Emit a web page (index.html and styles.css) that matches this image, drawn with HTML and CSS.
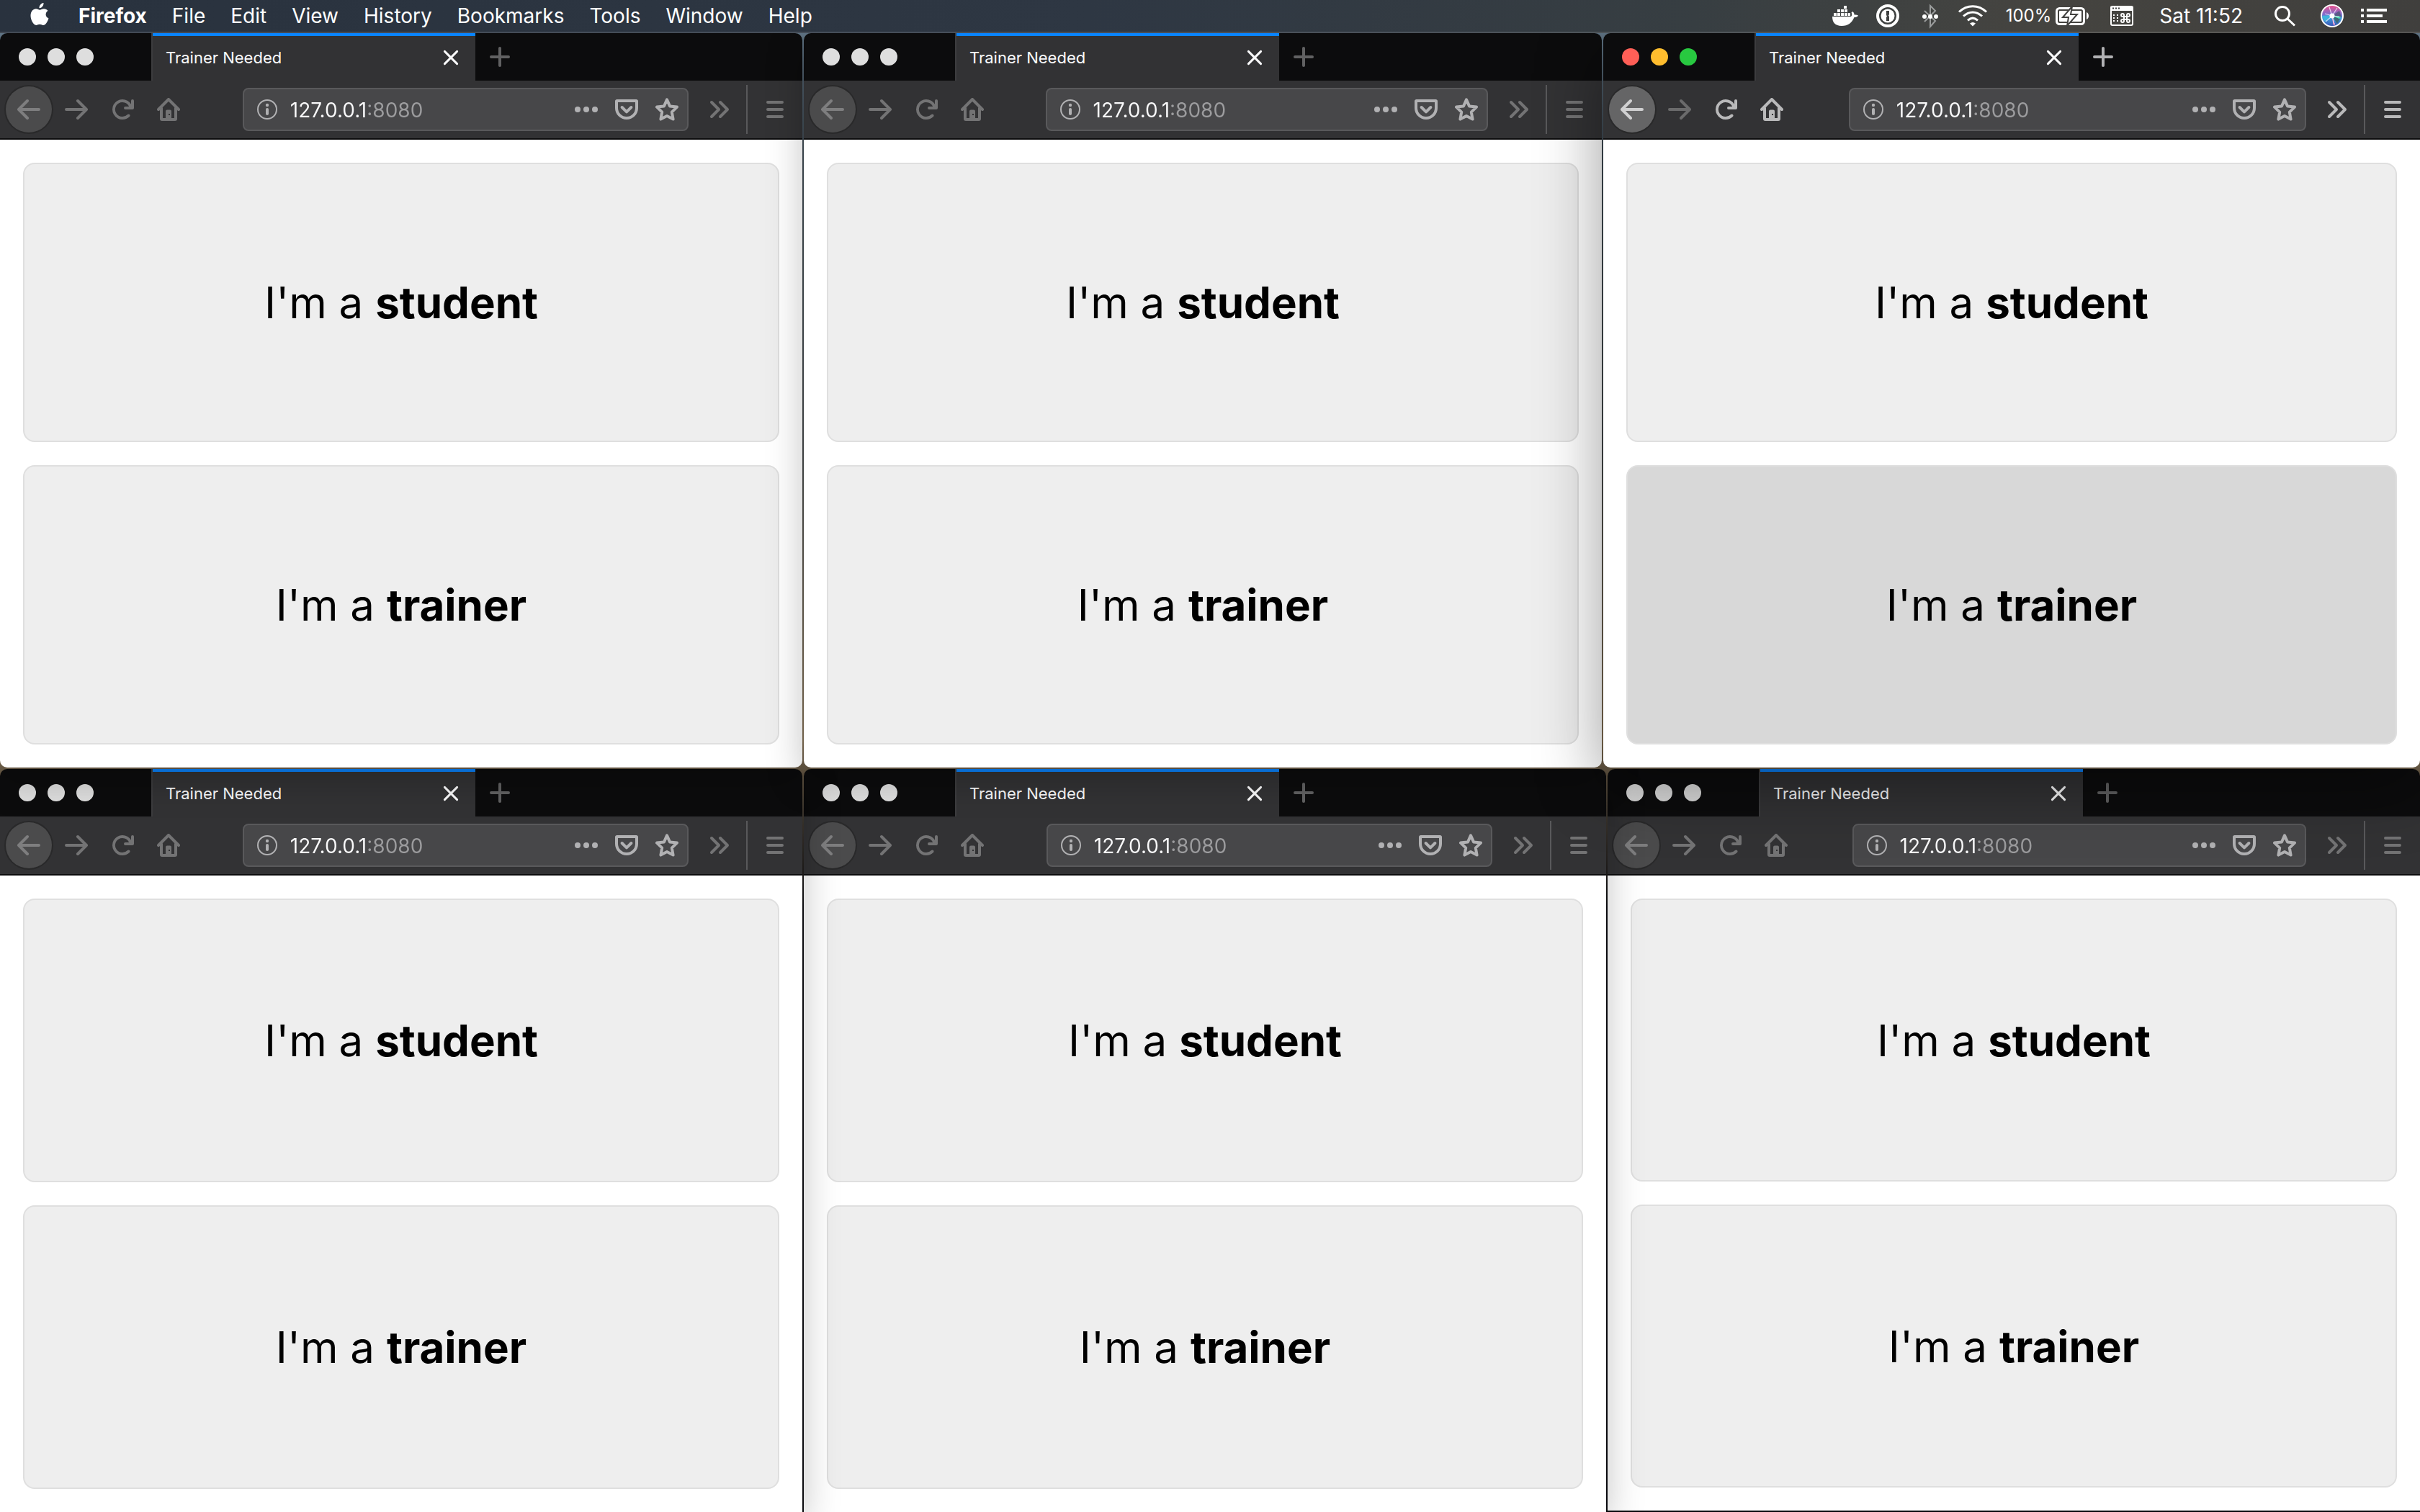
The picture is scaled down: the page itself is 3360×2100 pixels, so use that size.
FILE: index.html
```html
<!DOCTYPE html>
<html lang="en">
<head>
<meta charset="utf-8">
<title>Trainer Needed</title>
<link rel="stylesheet" href="styles.css">
</head>
<body>
<svg class="sprite" aria-hidden="true">
  <symbol id="back" viewBox="0 0 16 16"><path class="line" d="M15 8H1.5M7 2L1 8l6 6"/></symbol>
  <symbol id="forward" viewBox="0 0 16 16"><path class="line" d="M1 8h13.500M9 2l6 6-6 6"/></symbol>
  <symbol id="reload" viewBox="0 0 16 16"><path d="M15 1a1 1 0 0 0-1 1v2.418A6.995 6.995 0 1 0 8 15a6.954 6.954 0 0 0 4.95-2.05 1 1 0 0 0-1.414-1.414A5.019 5.019 0 1 1 12.549 6H10a1 1 0 0 0 0 2h5a1 1 0 0 0 1-1V2a1 1 0 0 0-1-1z"/></symbol>
  <symbol id="home" viewBox="0 0 16 16"><path class="line" d="M1 8l7-7 7 7M3 7v7.500a.5.5 0 0 0 .5.5h9a.5.5 0 0 0 .5-.5V7"/><path fill-rule="evenodd" d="M6 15V9.200A1 1 0 0 1 7 8.200h2a1 1 0 0 1 1 1V15zM8 11v1h1v-1z"/></symbol>
  <symbol id="info" viewBox="0 0 16 16"><circle class="thin" cx="8" cy="8" r="6.500"/><circle cx="8" cy="5" r="1.100"/><path class="line" d="M8 8v3"/></symbol>
  <symbol id="dots" viewBox="0 0 16 16"><circle cx="2" cy="8" r="2"/><circle cx="8" cy="8" r="2"/><circle cx="14" cy="8" r="2"/></symbol>
  <symbol id="pocket" viewBox="0 0 16 16"><path class="line" d="M1.300 2h13.400a.3.3 0 0 1 .3.300V7A7 7 0 0 1 1 7V2.300a.3.3 0 0 1 .3-.3z"/><path class="line" d="M4.800 6.500L8 9.700l3.200-3.200"/></symbol>
  <symbol id="star" viewBox="0 0 16 16"><path class="line" d="M8 1.200l2 4.500 5 .6-3.600 3.500.9 5L8 12.500l-4.300 2.300.9-5L1 6.300l5-.6z"/></symbol>
  <symbol id="more" viewBox="0 0 16 16"><path class="line" d="M3 3l5 5-5 5M9 3l5 5-5 5"/></symbol>
  <symbol id="menu" viewBox="0 0 16 16"><path class="line" d="M3 3h10M3 8h10M3 13h10"/></symbol>
  <symbol id="close" viewBox="0 0 16 16"><path class="mid" d="M3.700 3.700l8.600 8.600M12.300 3.700l-8.600 8.600"/></symbol>
  <symbol id="plus" viewBox="0 0 16 16"><path class="line" d="M8 2v12M2 8h12"/></symbol>
</svg>

<header class="menubar">
  <nav class="menus">
    <button class="apple" aria-label="Apple menu"><svg viewBox="0 0 26 32"><path d="M18.500 0c.3 3.800-2.600 7.200-6 7.300C12.100 3.700 15.300.4 18.500 0z"/><path d="M24.500 11c-4.300 2.600-3.700 8.600 1 10.500C24 26 21.300 31 18 31c-2 0-2.600-1.200-4.900-1.200S10 31 8.200 31C4.500 31 .5 23.600.5 17.800.5 12 4 8.300 8 8.300c2.200 0 3.800 1.400 5.200 1.400S16.500 8.200 19 8.200c2.200 0 4.200 1 5.500 2.800z"/></svg></button>
    <button class="app">Firefox</button>
    <button>File</button>
    <button>Edit</button>
    <button>View</button>
    <button>History</button>
    <button>Bookmarks</button>
    <button>Tools</button>
    <button>Window</button>
    <button>Help</button>
  </nav>
  <div class="status">
    <svg class="w38" viewBox="0 0 38 44"><path d="M1 23h26c1.500-1 1.500-4 .5-5.500L29 16c2 1 2.500 3 2.500 4.500 2-.3 4 0 5.500 1-1 2-3 2.500-5.500 2.500C28 32 23 36 14 36 5 36 1 31 1 23z"/><path d="M3 18h4v4H3zM8 18h4v4H8zM13 18h4v4h-4zM18 18h4v4h-4zM23 18h3v4h-3zM8 13h4v4H8zM13 13h4v4h-4zM18 13h4v4h-4zM17 8h4v4h-4z"/></svg>
    <svg class="w38" viewBox="0 0 38 44"><circle class="ring" cx="16" cy="22" r="14"/><circle cx="16" cy="22" r="9.500"/><path class="hole" d="M14 15h4v5l-1 1.500 1 1.500v6h-4v-5l1-1.500-1-1.500z"/></svg>
    <svg class="w26" viewBox="0 0 26 44"><path class="rune" d="M5 15l15 14-7 8V8l7 7L5 30"/><circle cx="5" cy="23" r="3"/><circle cx="13" cy="23" r="3"/><circle cx="21" cy="23" r="3"/></svg>
    <svg class="w44" viewBox="0 0 44 44"><path class="wave" d="M3 16.500c11-10.500 27-10.500 38 0M9 22.500c8-7.500 18-7.500 26 0M15 28.300c4.500-4 9.500-4 14 0"/><path d="M18 32.500c2.500-2 5.500-2 8 0L22 36.500z"/></svg>
    <div class="battery"><span>100%</span>
      <svg class="w48" viewBox="0 0 48 44"><rect class="wave" x="1.500" y="11.500" width="38" height="22" rx="4"/><rect x="5" y="15" width="31" height="15" rx="1"/><path d="M43 17c4 1.500 4 8.500 0 10z"/><path class="bolt" d="M23 9L10 24h8l-2 12 14-16h-9z"/></svg></div>
    <svg class="w48" viewBox="0 0 48 44"><rect class="frame" x="5" y="9" width="30" height="26" rx="2"/><path d="M4 9h32v6H4z"/><path class="hole" d="M7 10.500h2v2H7zM11 10.500h2v2h-2zM15 10.500h2v2h-2z"/><path d="M8 20h2v2H8zM13 20h2v2h-2zM8 24h2v2H8zM13 24h2v2h-2zM8 28h2v2H8zM13 28h2v2h-2z"/><path class="frame" d="M23 21v8a2 2 0 1 1-2-2h8a2 2 0 1 1-2 2v-8a2 2 0 1 1 2 2h-8a2 2 0 1 1 2-2z"/></svg>
    <time>Sat 11:52</time>
    <svg class="w60" viewBox="0 0 60 44"><circle class="glass" cx="31" cy="19" r="9.500"/><path class="glass" d="M38 26l10 9.500"/></svg>
    <svg class="w32" viewBox="0 0 32 44"><defs><linearGradient id="siri" x1="0" y1="0" x2="0" y2="1"><stop offset="0" stop-color="#f0508c"/><stop offset=".45" stop-color="#7a6fd0"/><stop offset=".6" stop-color="#3f9fd8"/><stop offset="1" stop-color="#3a4fb5"/></linearGradient></defs><circle cx="16" cy="22" r="15" fill="url(#siri)"/><path d="M17 21l9-6 3 9z" fill="#5a5a86"/><path d="M16 22l11 4-4 7z" fill="#3c6b78"/><path d="M2 22l13-1-9 9z" fill="#3fb4dc"/><path d="M16 22l12 1-2 3z" fill="#52e0b4"/><path d="M15 22l3 13 2-1z" fill="#ff7ac0"/><path d="M16 22L12 10M16 22l7-11M16 22L6 19M16 22l-9 8M16 22l10 1M16 22l3 12" stroke="#fff" stroke-opacity=".7" stroke-width="1.200"/><circle cx="16" cy="22" r="3.500"/><circle class="siri-rim" cx="16" cy="22" r="15"/></svg>
    <svg class="w36" viewBox="0 0 36 44"><path d="M0 12h4v4H0zM8 12h28v4H8zM0 20h4v4H0zM8 20h22v4H8zM0 28h4v4H0zM8 28h28v4H8z"/></svg>
  </div>
</header>

<div class="desktop">
  <div class="row row-top">
    <section class="window">
      <div class="tabstrip"><div class="lights"><i></i><i></i><i></i></div><div class="tab"><span>Trainer Needed</span><button aria-label="Close tab"><svg><use href="#close"/></svg></button></div><button class="newtab" aria-label="New tab"><svg><use href="#plus"/></svg></button></div>
      <div class="toolbar">
        <button class="back" aria-label="Back"><svg><use href="#back"/></svg></button><button class="forward" aria-label="Forward"><svg><use href="#forward"/></svg></button><button aria-label="Reload"><svg><use href="#reload"/></svg></button><button aria-label="Home"><svg><use href="#home"/></svg></button>
        <div class="spring"></div>
        <div class="urlbar"><svg><use href="#info"/></svg><input aria-label="Address" value="127.0.0.1:8080"><svg><use href="#dots"/></svg><svg><use href="#pocket"/></svg><svg><use href="#star"/></svg></div>
        <button class="overflow" aria-label="More tools"><svg><use href="#more"/></svg></button><div class="divider"></div><button aria-label="Open menu"><svg><use href="#menu"/></svg></button>
      </div>
      <main class="page"><button class="choice">I'm a <b>student</b></button><button class="choice">I'm a <b>trainer</b></button></main>
    </section>
    <section class="window">
      <div class="tabstrip"><div class="lights"><i></i><i></i><i></i></div><div class="tab"><span>Trainer Needed</span><button aria-label="Close tab"><svg><use href="#close"/></svg></button></div><button class="newtab" aria-label="New tab"><svg><use href="#plus"/></svg></button></div>
      <div class="toolbar">
        <button class="back" aria-label="Back"><svg><use href="#back"/></svg></button><button class="forward" aria-label="Forward"><svg><use href="#forward"/></svg></button><button aria-label="Reload"><svg><use href="#reload"/></svg></button><button aria-label="Home"><svg><use href="#home"/></svg></button>
        <div class="spring"></div>
        <div class="urlbar"><svg><use href="#info"/></svg><input aria-label="Address" value="127.0.0.1:8080"><svg><use href="#dots"/></svg><svg><use href="#pocket"/></svg><svg><use href="#star"/></svg></div>
        <button class="overflow" aria-label="More tools"><svg><use href="#more"/></svg></button><div class="divider"></div><button aria-label="Open menu"><svg><use href="#menu"/></svg></button>
      </div>
      <main class="page"><button class="choice">I'm a <b>student</b></button><button class="choice">I'm a <b>trainer</b></button></main>
    </section>
    <section class="window active">
      <div class="tabstrip"><div class="lights"><i></i><i></i><i></i></div><div class="tab"><span>Trainer Needed</span><button aria-label="Close tab"><svg><use href="#close"/></svg></button></div><button class="newtab" aria-label="New tab"><svg><use href="#plus"/></svg></button></div>
      <div class="toolbar">
        <button class="back" aria-label="Back"><svg><use href="#back"/></svg></button><button class="forward" aria-label="Forward"><svg><use href="#forward"/></svg></button><button aria-label="Reload"><svg><use href="#reload"/></svg></button><button aria-label="Home"><svg><use href="#home"/></svg></button>
        <div class="spring"></div>
        <div class="urlbar"><svg><use href="#info"/></svg><input aria-label="Address" value="127.0.0.1:8080"><svg><use href="#dots"/></svg><svg><use href="#pocket"/></svg><svg><use href="#star"/></svg></div>
        <button class="overflow" aria-label="More tools"><svg><use href="#more"/></svg></button><div class="divider"></div><button aria-label="Open menu"><svg><use href="#menu"/></svg></button>
      </div>
      <main class="page"><button class="choice">I'm a <b>student</b></button><button class="choice hovered">I'm a <b>trainer</b></button></main>
    </section>
  </div>
  <div class="row row-bottom">
    <section class="window">
      <div class="tabstrip"><div class="lights"><i></i><i></i><i></i></div><div class="tab"><span>Trainer Needed</span><button aria-label="Close tab"><svg><use href="#close"/></svg></button></div><button class="newtab" aria-label="New tab"><svg><use href="#plus"/></svg></button></div>
      <div class="toolbar">
        <button class="back" aria-label="Back"><svg><use href="#back"/></svg></button><button class="forward" aria-label="Forward"><svg><use href="#forward"/></svg></button><button aria-label="Reload"><svg><use href="#reload"/></svg></button><button aria-label="Home"><svg><use href="#home"/></svg></button>
        <div class="spring"></div>
        <div class="urlbar"><svg><use href="#info"/></svg><input aria-label="Address" value="127.0.0.1:8080"><svg><use href="#dots"/></svg><svg><use href="#pocket"/></svg><svg><use href="#star"/></svg></div>
        <button class="overflow" aria-label="More tools"><svg><use href="#more"/></svg></button><div class="divider"></div><button aria-label="Open menu"><svg><use href="#menu"/></svg></button>
      </div>
      <main class="page"><button class="choice">I'm a <b>student</b></button><button class="choice">I'm a <b>trainer</b></button></main>
    </section>
    <section class="window">
      <div class="tabstrip"><div class="lights"><i></i><i></i><i></i></div><div class="tab"><span>Trainer Needed</span><button aria-label="Close tab"><svg><use href="#close"/></svg></button></div><button class="newtab" aria-label="New tab"><svg><use href="#plus"/></svg></button></div>
      <div class="toolbar">
        <button class="back" aria-label="Back"><svg><use href="#back"/></svg></button><button class="forward" aria-label="Forward"><svg><use href="#forward"/></svg></button><button aria-label="Reload"><svg><use href="#reload"/></svg></button><button aria-label="Home"><svg><use href="#home"/></svg></button>
        <div class="spring"></div>
        <div class="urlbar"><svg><use href="#info"/></svg><input aria-label="Address" value="127.0.0.1:8080"><svg><use href="#dots"/></svg><svg><use href="#pocket"/></svg><svg><use href="#star"/></svg></div>
        <button class="overflow" aria-label="More tools"><svg><use href="#more"/></svg></button><div class="divider"></div><button aria-label="Open menu"><svg><use href="#menu"/></svg></button>
      </div>
      <main class="page"><button class="choice">I'm a <b>student</b></button><button class="choice">I'm a <b>trainer</b></button></main>
    </section>
    <section class="window short">
      <div class="tabstrip"><div class="lights"><i></i><i></i><i></i></div><div class="tab"><span>Trainer Needed</span><button aria-label="Close tab"><svg><use href="#close"/></svg></button></div><button class="newtab" aria-label="New tab"><svg><use href="#plus"/></svg></button></div>
      <div class="toolbar">
        <button class="back" aria-label="Back"><svg><use href="#back"/></svg></button><button class="forward" aria-label="Forward"><svg><use href="#forward"/></svg></button><button aria-label="Reload"><svg><use href="#reload"/></svg></button><button aria-label="Home"><svg><use href="#home"/></svg></button>
        <div class="spring"></div>
        <div class="urlbar"><svg><use href="#info"/></svg><input aria-label="Address" value="127.0.0.1:8080"><svg><use href="#dots"/></svg><svg><use href="#pocket"/></svg><svg><use href="#star"/></svg></div>
        <button class="overflow" aria-label="More tools"><svg><use href="#more"/></svg></button><div class="divider"></div><button aria-label="Open menu"><svg><use href="#menu"/></svg></button>
      </div>
      <main class="page"><button class="choice">I'm a <b>student</b></button><button class="choice">I'm a <b>trainer</b></button></main>
    </section>
  </div>
</div>
</body>
</html>
```
FILE: styles.css
```css
* { box-sizing: border-box; }
body {
  margin: 0;
  min-height: 100vh;
  display: flex;
  flex-direction: column;
  overflow: hidden;
  font-family: Inter, "Liberation Sans", sans-serif;
  background: linear-gradient(#6c8396 0, #46525c 10%, #4a4f50 30%, #8f7a5c 49%, #4a4238 54%, #0c0c10 60%, #0c0c10 100%);
}
button { border: 0; padding: 0; margin: 0; background: none; color: inherit; font: inherit; }
svg { display: block; fill: currentColor; overflow: visible; }
.sprite { position: absolute; width: 0; height: 0; }
.line, .mid, .thin { fill: none; stroke: currentColor; stroke-width: 2; stroke-linecap: round; stroke-linejoin: round; }
.mid { stroke-width: 1.5; }
.thin { stroke-width: 1; }

/* System menu bar */
.menubar {
  position: relative;
  z-index: 2;
  height: 46px;
  display: flex;
  justify-content: space-between;
  align-items: flex-start;
  padding: 0 46px 0 42px;
  border-bottom: 2px solid rgba(255, 255, 255, .12);
  background: linear-gradient(90deg, #29323e, #2e3743 45%, #373e42 70%, #454440 84%, #403f3d);
  color: #fff;
  font-size: 28px;
  line-height: 44px;
}
.menus { display: flex; align-items: flex-start; gap: 35px; }
.menus .apple { width: 26px; margin-right: 6px; }
.apple svg { width: 26px; height: 32px; margin-top: 4px; }
.app { font-weight: 700; }
.status { display: flex; gap: 24px; }
.status svg { height: 44px; }
.w26 { width: 26px; }
.w32 { width: 32px; }
.w36 { width: 36px; }
.w38 { width: 38px; }
.w44 { width: 44px; }
.w48 { width: 48px; }
.w60 { width: 60px; }
.battery { display: flex; gap: 6px; font-size: 24px; }
.hole { fill: #3e4040; }
.ring { fill: none; stroke: #fff; stroke-width: 4; }
.rune { fill: none; stroke: #9b9d9d; stroke-width: 2; }
.wave { fill: none; stroke: #fff; stroke-width: 3; }
.frame { fill: none; stroke: #fff; stroke-width: 2; }
.bolt { stroke: #41413f; stroke-width: 2; }
.glass { fill: none; stroke: #fff; stroke-width: 3; }
.siri-rim { fill: none; stroke: #fff; stroke-width: 2; }

/* Tiled windows */
.desktop { flex: 1; display: grid; grid-template-rows: 1020fr 1032fr; gap: 2px; }
.row { position: relative; z-index: 0; display: grid; gap: 2px; }
.row-top { z-index: 1; grid-template-columns: 1114fr 1108fr 1134fr; }
.row-bottom { grid-template-columns: 1114fr 1114fr 1128fr; }
.window {
  position: relative;
  display: flex;
  flex-direction: column;
  min-width: 0;
  border-radius: 10px;
  box-shadow: 0 16px 52px rgba(0, 0, 0, .25);
  color: #737374;
}
.row-bottom .window { border-radius: 10px 10px 0 0; }
.row-bottom .window:nth-child(1) { z-index: 3; }
.row-bottom .window:nth-child(2) { z-index: 2; }
.row-bottom .window:nth-child(3) { z-index: 1; }
.short { margin-bottom: 2px; }
.window.active { color: #b9b9ba; box-shadow: 0 24px 92px rgba(0, 0, 0, .4); }

.tabstrip { display: flex; height: 66px; background: #0c0c0d; border-radius: 10px 10px 0 0; }
.lights { width: 210px; display: flex; align-items: center; gap: 16px; padding-left: 26px; }
.lights i { width: 24px; height: 24px; border-radius: 50%; background: #dedede; }
.active .lights i:nth-child(1) { background: #ff5f57; }
.active .lights i:nth-child(2) { background: #ffbd2e; }
.active .lights i:nth-child(3) { background: #28c940; }
.tab {
  width: 450px;
  display: flex;
  justify-content: space-between;
  align-items: center;
  padding: 2px 18px 0;
  border-left: 2px solid #3c3c3e;
  background: linear-gradient(#0a84ff 4px, #323234 4px);
  color: #f9f9fa;
  font-size: 22px;
}
.tab svg, .newtab svg { width: 32px; height: 32px; }
.newtab { width: 68px; display: flex; justify-content: center; align-items: center; color: #616162; }
.active .newtab { color: #b1b1b3; }

.toolbar {
  display: flex;
  align-items: center;
  height: 82px;
  padding: 0 6px 0 8px;
  background: #323234;
  border-bottom: 2px solid #0c0c0d;
}
.toolbar button { width: 64px; height: 64px; display: grid; place-items: center; flex: none; }
.toolbar svg { width: 32px; height: 32px; flex: none; }
.toolbar .back { margin-right: 2px; border-radius: 50%; background: #4b4b4c; box-shadow: 0 0 0 2px #29292a; color: #7e7e7f; }
.active .toolbar .back { background: #656566; color: #d0d0d1; }
.active .forward { color: #6a6a6b; }
.spring { flex: 1 1 0; }
.urlbar {
  flex: 4 1 336px;
  min-width: 0;
  height: 60px;
  display: flex;
  align-items: center;
  gap: 24px;
  padding: 0 12px 0 16px;
  border: 2px solid #59595b;
  border-radius: 8px;
  background: #474749;
  color: #b1b1b3;
}
.urlbar input {
  flex: 1;
  min-width: 0;
  margin-left: -8px;
  padding: 2px 0 0;
  border: 0;
  outline: 0;
  font: 28px/36px Inter, "Liberation Sans", sans-serif;
  color: transparent;
  background: linear-gradient(90deg, #f9f9fa 108px, #9c9c9e 108px);
  -webkit-background-clip: text;
  background-clip: text;
}
.toolbar .overflow { margin: 0 6px 0 10px; }
.divider { width: 2px; height: 68px; margin-right: 6px; background: #59595b; }

.page {
  flex: 1;
  display: grid;
  grid-template-rows: 1fr 1fr;
  gap: 32px;
  padding: 32px;
  background: #fff;
  border-radius: 0 0 10px 10px;
}
.row-bottom .page { border-radius: 0; }
.choice { border: 2px solid #dfdfdf; border-radius: 16px; background: #eee; color: #000; font-size: 60px; }
.choice.hovered { background: #d8d8d8; }
.choice b { font-weight: 700; }
```
